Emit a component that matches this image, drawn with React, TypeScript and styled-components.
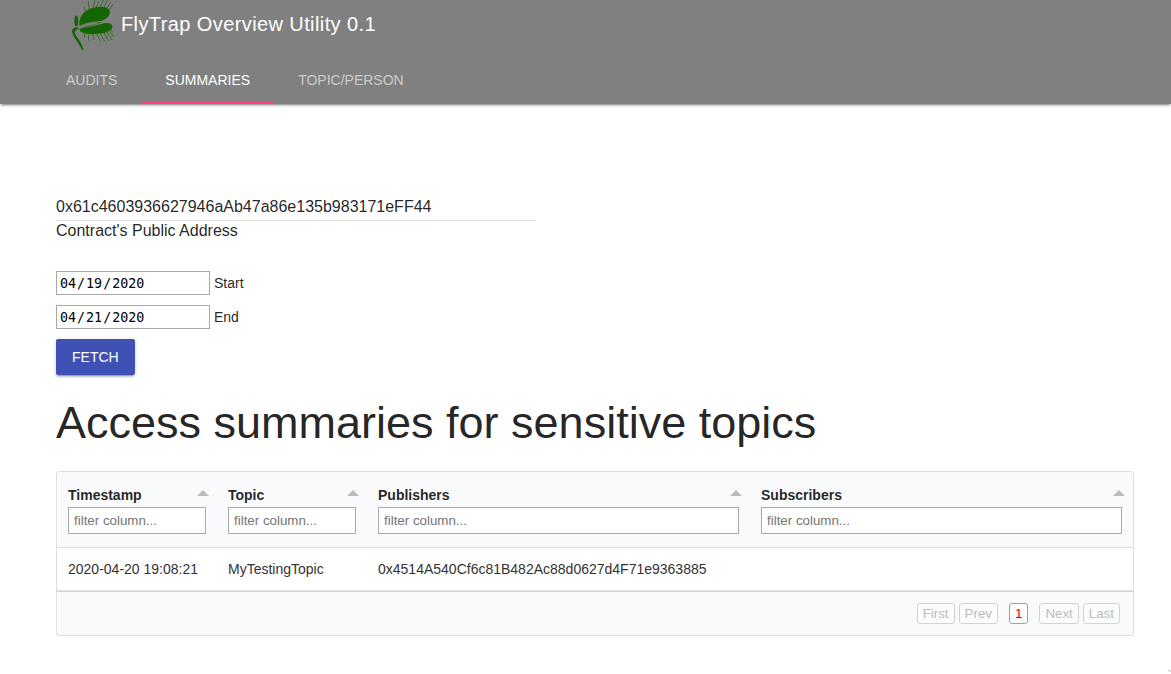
import React, { useState } from "react";
import styled, { createGlobalStyle } from "styled-components";

const raised =
  "0 2px 2px 0 rgba(0, 0, 0, 0.14), 0 3px 1px -2px rgba(0, 0, 0, 0.2), 0 1px 5px 0 rgba(0, 0, 0, 0.12)";

const GlobalStyle = createGlobalStyle`
  *, *::before, *::after { box-sizing: border-box; }
  body {
    margin: 0;
    background: #fff;
    color: rgba(0, 0, 0, 0.87);
    font-family: "Liberation Sans", Arial, sans-serif;
    font-size: 14px;
    line-height: 20px;
  }
`;

const Header = styled.header`
  background: #808080;
  color: #fff;
  box-shadow: ${raised};
`;

const Brand = styled.div`
  display: flex;
  align-items: flex-start;
  gap: 6px;
  height: 56px;
  padding: 0 70px;
`;

const Title = styled.span`
  font-size: 20px;
  line-height: 48px;
  letter-spacing: 0.02em;
`;

const Tabs = styled.nav`
  display: flex;
  padding: 0 42px;
`;

const Tab = styled.a<{ $active?: boolean }>`
  height: 48px;
  padding: 0 24px;
  line-height: 48px;
  text-transform: uppercase;
  text-decoration: none;
  color: ${(p) => (p.$active ? "#fff" : "rgba(255, 255, 255, 0.6)")};
  box-shadow: ${(p) => (p.$active ? "inset 0 -2px #ff4081" : "none")};
`;

const Main = styled.main`
  padding: 92px 37px 38px 56px;
`;

const Address = styled.div`
  display: flex;
  flex-direction: column;
  max-width: 480px;
  margin-bottom: 30px;
  font-size: 16px;

  input {
    height: 25px;
    padding: 0 0 2px;
    border: 0;
    border-bottom: 1px solid #dedede;
    background: none;
    color: inherit;
    font: inherit;
    outline: none;
  }
`;

const DateRow = styled.div`
  display: flex;
  align-items: center;
  gap: 4px;
  margin-bottom: 10px;
`;

const DateInput = styled.input`
  width: 154px;
  height: 24px;
  padding: 1px 2px;
  border: 1px solid #a9a9a9;
  background: #fff;
  color: #000;
  font-family: "DejaVu Sans Mono", monospace;

  &::-webkit-calendar-picker-indicator { display: none; }
`;

const FetchButton = styled.button`
  display: block;
  height: 36px;
  padding: 0 16px;
  border: 0;
  border-radius: 2px;
  background: #3f51b5;
  color: #fff;
  font: 14px "Liberation Sans", Arial, sans-serif;
  text-transform: uppercase;
  box-shadow: ${raised};
`;

const Heading = styled.h1`
  margin: 24px 0;
  font-size: 45px;
  font-weight: 400;
  line-height: 48px;
`;

const Panel = styled.section`
  border: 1px solid #dddee0;
  border-radius: 3px;
  background: #f9fafc;
  overflow: hidden;
`;

const Table = styled.table`
  width: 100%;
  border-collapse: separate;
  border-spacing: 0;
  table-layout: fixed;
`;

const HeadCell = styled.th<{ $width?: number }>`
  width: ${(p) => (p.$width ? `${p.$width}px` : "auto")};
  height: 76px;
  padding: 13px 11px;
  border-bottom: 1px solid #dddee0;
  text-align: left;
  vertical-align: top;
`;

const SortButton = styled.button`
  display: flex;
  align-items: center;
  justify-content: space-between;
  width: calc(100% + 3px);
  height: 20px;
  padding: 0;
  border: 0;
  background: none;
  color: inherit;
  font: bold 14px "Liberation Sans", Arial, sans-serif;

  &::after {
    content: "";
    margin-bottom: 4px;
    border: 6px solid transparent;
    border-top: 0;
    border-bottom-color: #bbb;
  }
`;

const Filter = styled.input`
  display: block;
  width: 100%;
  height: 27px;
  margin-top: 2px;
  padding: 0 5px;
  border: 1px solid #a9a9a9;
  background: #fff;
  font-family: "Liberation Sans", Arial, sans-serif;
`;

const Cell = styled.td`
  height: 43px;
  padding: 0 11px;
  border-bottom: 1px solid #e0e0e0;
  background: #fff;
  color: #333;
`;

const Pager = styled.nav`
  display: flex;
  justify-content: flex-end;
  gap: 11px;
  height: 44px;
  padding: 11px 13px;
  border-top: 1px solid #d6d6d8;
`;

const PageGroup = styled.div`
  display: flex;
  gap: 4px;
`;

const PageButton = styled.button<{ $current?: boolean }>`
  height: 21px;
  padding: 0 5px;
  border: 1px solid ${(p) => (p.$current ? "#a0a0a4" : "#d2d3d4")};
  border-radius: 3px;
  background: ${(p) => (p.$current ? "#fff" : "#fbfcfc")};
  color: ${(p) => (p.$current ? "#e60000" : "#bcbcbc")};
  font-family: "Liberation Sans", Arial, sans-serif;
`;

const CornerMark = styled.svg`
  position: fixed;
  right: 0;
  bottom: 0;
`;

const columns = [
  { title: "Timestamp", width: 160 },
  { title: "Topic", width: 150 },
  { title: "Publishers" },
  { title: "Subscribers" },
];

const rows = [
  ["2020-04-20 19:08:21", "MyTestingTopic", "0x4514A540Cf6c81B482Ac88d0627d4F71e9363885", ""],
];

function FlyTrapLogo() {
  return (
    <svg width="45" height="52" viewBox="30 0 135 156" fill="#146400" aria-hidden="true">
      <path d="M58 74C57 52 70 34 90 26C110 18 140 17 148 30C154 43 142 57 124 63C100 65 76 68 58 79Z" />
      <path d="M61 86C80 77 104 78 121 73C140 67 153 67 157 78C158 89 144 97 126 100C102 104 70 104 60 93Z" />
      <path d="M48 46C54 46 56 60 54 72L51 80L46 78C41 68 42 52 48 46Z" />
      <path d="M54 81C44 80 36 86 36 94C38 112 57 128 66 151L70 150C68 132 51 113 44 98C43 92 49 92 58 88Z" />
      <g fill="none" stroke="#146400" strokeWidth="2">
        <path d="M58 80C78 67 101 63 122 67C104 78 79 75 61 86" />
        <path d="M76 33L73 20M87 27L85 3M99 23L105 0M110 21L116 3M121 21L130 0M132 22L141 1M141 25L152 5M148 31L158 12" strokeWidth="2" />
        <path d="M73 100L74 114M85 101L86 122M98 102L103 120M110 101L121 124M121 100L134 124M132 98L146 123M140 95L157 121M147 92L162 110M153 88L158 98" strokeWidth="2" />
      </g>
      <g fill="none" stroke="#808080" strokeWidth="2">
        <path d="M59 79C80 68 102 65 124 65M62 84C84 78 106 78 122 69" />
        <path d="M43 80L58 82M50 90L60 82M57 70L58 82" />
      </g>
    </svg>
  );
}

export default function App() {
  const [address, setAddress] = useState("0x61c4603936627946aAb47a86e135b983171eFF44");
  const [start, setStart] = useState("2020-04-19");
  const [end, setEnd] = useState("2020-04-21");

  return (
    <>
      <GlobalStyle />
      <Header>
        <Brand>
          <FlyTrapLogo />
          <Title>FlyTrap Overview Utility 0.1</Title>
        </Brand>
        <Tabs>
          <Tab href="#audits">Audits</Tab>
          <Tab href="#summaries" $active>Summaries</Tab>
          <Tab href="#topic">Topic/Person</Tab>
        </Tabs>
      </Header>
      <Main>
        <Address>
          <input id="address" value={address} onChange={(e) => setAddress(e.target.value)} />
          <label htmlFor="address">Contract's Public Address</label>
        </Address>
        <DateRow>
          <DateInput id="start" type="date" value={start} onChange={(e) => setStart(e.target.value)} />
          <label htmlFor="start">Start</label>
        </DateRow>
        <DateRow>
          <DateInput id="end" type="date" value={end} onChange={(e) => setEnd(e.target.value)} />
          <label htmlFor="end">End</label>
        </DateRow>
        <FetchButton type="button">Fetch</FetchButton>
        <Heading>Access summaries for sensitive topics</Heading>
        <Panel>
          <Table>
            <thead>
              <tr>
                {columns.map((c) => (
                  <HeadCell key={c.title} $width={c.width}>
                    <SortButton type="button">{c.title}</SortButton>
                    <Filter placeholder="filter column..." aria-label={c.title} />
                  </HeadCell>
                ))}
              </tr>
            </thead>
            <tbody>
              {rows.map((r) => (
                <tr key={r[0]}>
                  {r.map((value, i) => (
                    <Cell key={i}>{value}</Cell>
                  ))}
                </tr>
              ))}
            </tbody>
          </Table>
          <Pager>
            <PageGroup>
              <PageButton type="button" disabled>First</PageButton>
              <PageButton type="button" disabled>Prev</PageButton>
            </PageGroup>
            <PageButton type="button" $current>1</PageButton>
            <PageGroup>
              <PageButton type="button" disabled>Next</PageButton>
              <PageButton type="button" disabled>Last</PageButton>
            </PageGroup>
          </Pager>
        </Panel>
      </Main>
      <CornerMark width="3" height="4" viewBox="0 0 3 4" aria-hidden="true">
        <path d="M0 0h2v1H0zM1 1h2v1H1z" fill="#d0d0d0" />
      </CornerMark>
    </>
  );
}
